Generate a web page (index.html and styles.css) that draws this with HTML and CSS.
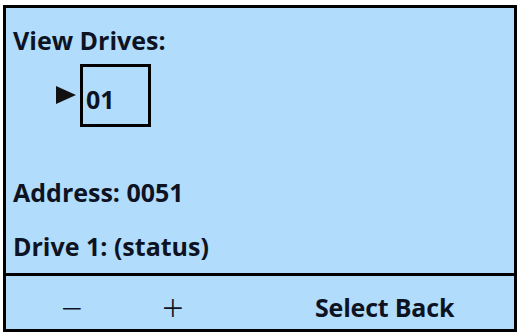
FILE: index.html
```html
<!DOCTYPE html>
<html>
<head>
<meta charset="utf-8">
<link rel="stylesheet" href="styles.css">
</head>
<body>
<div class="screen">
  <div class="main">
    <div class="line title">View Drives:</div>
    <div class="drive-row">
      <span class="pointer"></span>
      <div class="drive-box">01</div>
    </div>
    <div class="line address">Address: 0051</div>
    <div class="line status">Drive 1: (status)</div>
  </div>
  <div class="footer">
    <span class="key minus">&minus;</span>
    <span class="key plus">+</span>
    <span class="key labels">Select Back</span>
  </div>
</div>
</body>
</html>
```
FILE: styles.css
```css
html, body {
  margin: 0;
  padding: 0;
  background: #ffffff;
}
body {
  font-family: "Open Sans", Lato, "DejaVu Sans", sans-serif;
  color: #0d1322;
}
.screen {
  margin: 5px 0 0 3px;
  width: 514px;
  height: 327px;
  box-sizing: border-box;
  border: 3px solid #000;
  background: #b2dcfb;
  display: flex;
  flex-direction: column;
}
.main {
  flex: 1;
  padding: 18px 0 0 7px;
}
.line {
  font-size: 25px;
  font-weight: 700;
  line-height: 28px;
}
.drive-row {
  display: flex;
  align-items: center;
  margin: 10px 0 0 43px;
  height: 63px;
}
.pointer {
  width: 0;
  height: 0;
  border-top: 9px solid transparent;
  border-bottom: 9px solid transparent;
  border-left: 20px solid #111;
  margin-right: 4px;
  margin-top: -1px;
}
.drive-box {
  width: 71px;
  height: 63px;
  box-sizing: border-box;
  border: 3px solid #000;
  font-size: 25px;
  font-weight: 700;
  line-height: 28px;
  padding: 18px 0 0 3px;
}
.address {
  margin-top: 51px;
}
.status {
  margin-top: 26px;
}
.footer {
  height: 56px;
  box-sizing: border-box;
  border-top: 3px solid #000;
  display: flex;
  align-items: center;
  padding-top: 8px;
}
.key {
  display: block;
}
.minus {
  margin-left: 55px;
  width: 101px;
  font-size: 38px;
  font-weight: 300;
  line-height: 30px;
}
.plus {
  width: 153px;
  font-size: 38px;
  font-weight: 300;
  line-height: 30px;
}
.labels {
  font-size: 25px;
  font-weight: 700;
  line-height: 28px;
  letter-spacing: -0.2px;
}
```
